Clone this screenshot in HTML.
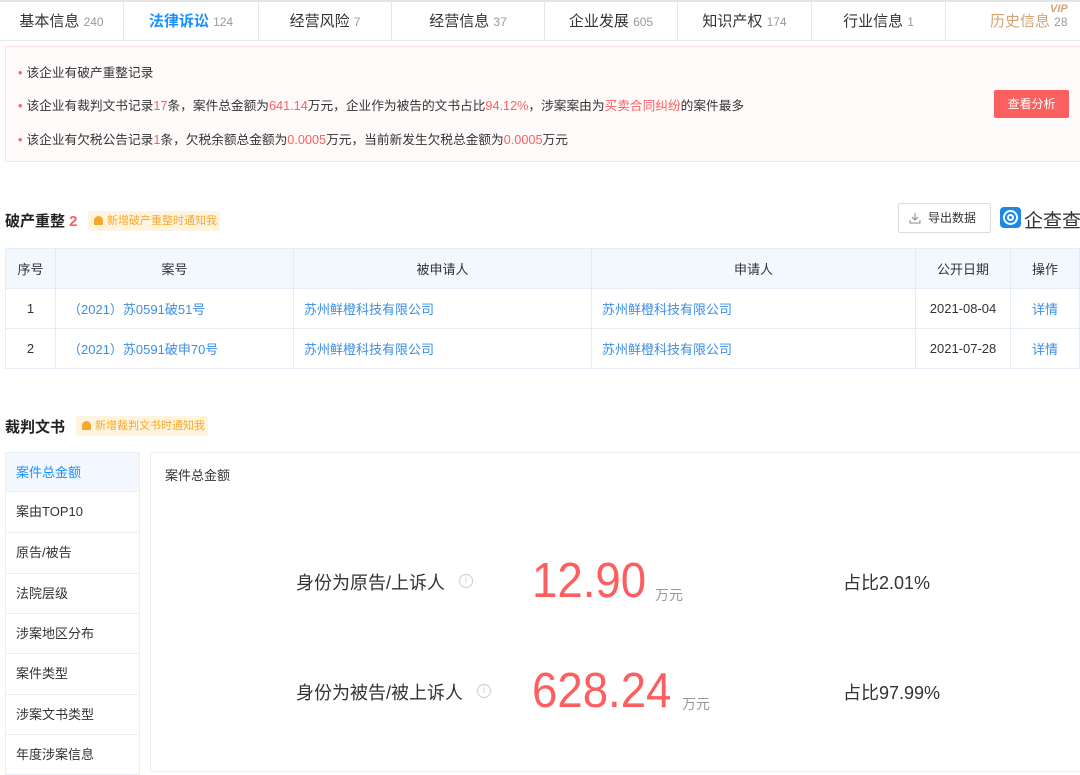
<!DOCTYPE html>
<html><head><meta charset="utf-8"><style>
*{margin:0;padding:0;box-sizing:border-box}
body{width:1080px;height:760px;overflow:hidden;background:#fff;font-family:"Liberation Sans","Noto Sans CJK SC",sans-serif;color:#333;position:relative}
.a{position:absolute;white-space:nowrap}
.tab{position:absolute;top:2px;height:39px;line-height:39px;text-align:center;font-size:15px;color:#333;border-right:1px solid #e8e8e8}
.tab small{font-size:12px;color:#999}
.red{color:#fc5f5f}
.li{position:absolute;left:18px;font-size:12.7px;color:#333;white-space:nowrap}
.li:before{content:"•";color:#fc5f5f;margin-right:4px}
.tag{position:absolute;height:20px;line-height:20px;background:#fff4e0;color:#f9a825;font-size:11px;padding-left:19px;border-radius:2px;white-space:nowrap;overflow:hidden}
.tag:before{content:"";position:absolute;left:6px;top:5px;width:9px;height:9px;background:#f9a825;border-radius:5px 5px 1px 1px}
table{position:absolute;left:5px;top:248px;width:1075px;border-collapse:collapse;font-size:13px}
td,th{border:1px solid #e4edf6;height:40px;font-weight:normal}
th{background:#f2f8fd;color:#333}
td{color:#333}
.bl{color:#3a8ee6}
.nav{position:absolute;left:5px;width:135px;height:40px;line-height:40px;padding-left:10px;font-size:13px;color:#333;border:1px solid #e8eff6;border-top:none}
.big{font-size:49px;color:#fc5f5f;line-height:56px;transform:scaleX(0.93);transform-origin:left}
</style></head><body>
<div class="a" style="left:0;top:0;width:1080px;height:2px;background:#e4e4e4"></div>
<div class="a" style="left:0;top:40px;width:1080px;height:1px;background:#e8e8e8"></div>
<div class="tab" style="left:0;width:124px">基本信息 <small>240</small></div>
<div class="tab" style="left:124px;width:135px;color:#1890ff;font-weight:bold">法律诉讼 <small style="font-weight:normal">124</small></div>
<div class="tab" style="left:259px;width:133px">经营风险 <small>7</small></div>
<div class="tab" style="left:392px;width:153px">经营信息 <small>37</small></div>
<div class="tab" style="left:545px;width:133px">企业发展 <small>605</small></div>
<div class="tab" style="left:678px;width:134px">知识产权 <small>174</small></div>
<div class="tab" style="left:812px;width:134px">行业信息 <small>1</small></div>
<div class="tab" style="left:946px;width:134px;border:none;color:#d4a574;text-align:left;padding-left:44px">历史信息 <small>28</small></div>
<div class="a" style="left:1050px;top:3px;font-size:11px;font-weight:bold;font-style:italic;color:#d4a574">VIP</div>

<div class="a" style="left:5px;top:46px;width:1080px;height:116px;background:#fffafa;border:1px solid #fde0e0"></div>
<div class="li" style="top:62px">该企业有破产重整记录</div>
<div class="li" style="top:95px">该企业有裁判文书记录<span class="red">17</span>条，案件总金额为<span class="red">641.14</span>万元，企业作为被告的文书占比<span class="red">94.12%</span>，涉案案由为<span class="red">买卖合同纠纷</span>的案件最多</div>
<div class="li" style="top:129px">该企业有欠税公告记录<span class="red">1</span>条，欠税余额总金额为<span class="red">0.0005</span>万元，当前新发生欠税总金额为<span class="red">0.0005</span>万元</div>
<div class="a" style="left:994px;top:90px;width:75px;height:28px;line-height:28px;background:#fc5f5f;color:#fff;font-size:12px;text-align:center;border-radius:2px">查看分析</div>

<div class="a" style="left:5px;top:210px;font-size:15px;font-weight:bold;color:#222">破产重整 <span class="red">2</span></div>
<div class="tag" style="left:88px;top:211px;width:132px">新增破产重整时通知我</div>
<div class="a" style="left:898px;top:203px;width:93px;height:30px;border:1px solid #ddd;border-radius:2px;font-size:12px;line-height:28px;padding-left:29px;color:#333">导出数据
<svg class="a" style="left:10px;top:8px" width="12" height="12" viewBox="0 0 12 12" fill="none" stroke="#888" stroke-width="1"><path d="M6 1v7M3 5l3 3 3-3M1 8v3h10V8"/></svg></div>
<div class="a" style="left:1000px;top:207px;width:21px;height:21px;background:#1e88e5;border-radius:4px"><div class="a" style="left:3px;top:3px;width:15px;height:15px;border:2px solid #fff;border-radius:50%"></div><div class="a" style="left:7px;top:7px;width:7px;height:7px;border:2px solid #fff;border-radius:50%"></div></div>
<div class="a" style="left:1024px;top:206px;font-size:19px;color:#333">企查查</div>

<table>
<tr><th style="width:50px">序号</th><th style="width:238px">案号</th><th style="width:298px">被申请人</th><th style="width:324px">申请人</th><th style="width:95px">公开日期</th><th>操作</th></tr>
<tr><td align="center">1</td><td class="bl" style="padding-left:12px">（2021）苏0591破51号</td><td class="bl" style="padding-left:10px">苏州鲜橙科技有限公司</td><td class="bl" style="padding-left:10px">苏州鲜橙科技有限公司</td><td align="center">2021-08-04</td><td class="bl" align="center">详情</td></tr>
<tr><td align="center">2</td><td class="bl" style="padding-left:12px">（2021）苏0591破申70号</td><td class="bl" style="padding-left:10px">苏州鲜橙科技有限公司</td><td class="bl" style="padding-left:10px">苏州鲜橙科技有限公司</td><td align="center">2021-07-28</td><td class="bl" align="center">详情</td></tr>
</table>

<div class="a" style="left:5px;top:416px;font-size:15px;font-weight:bold;color:#222">裁判文书</div>
<div class="tag" style="left:76px;top:416px;width:132px">新增裁判文书时通知我</div>

<div class="nav" style="top:452px;border-top:1px solid #e8eff6;background:#f2f8fd;color:#1890ff">案件总金额</div>
<div class="nav" style="top:492px;height:41px">案由TOP10</div>
<div class="nav" style="top:533px;height:41px">原告/被告</div>
<div class="nav" style="top:574px;height:40px">法院层级</div>
<div class="nav" style="top:614px;height:40px">涉案地区分布</div>
<div class="nav" style="top:654px;height:41px">案件类型</div>
<div class="nav" style="top:695px;height:40px">涉案文书类型</div>
<div class="nav" style="top:735px;height:40px">年度涉案信息</div>

<div class="a" style="left:150px;top:452px;width:940px;height:320px;border:1px solid #e8eff6"></div>
<div class="a" style="left:165px;top:465px;font-size:13px">案件总金额</div>

<div class="a" style="left:296px;top:569px;font-size:18px">身份为原告/上诉人</div>
<div class="a" style="left:459px;top:574px;width:14px;height:14px;border:1px solid #ccc;border-radius:50%;font-size:10px;line-height:12px;text-align:center;color:#ccc">i</div>
<div class="a big" style="left:532px;top:553px">12.90</div>
<div class="a" style="left:655px;top:585px;font-size:14px;color:#999">万元</div>
<div class="a" style="left:843px;top:569px;font-size:18px">占比2.01%</div>

<div class="a" style="left:296px;top:679px;font-size:18px">身份为被告/被上诉人</div>
<div class="a" style="left:477px;top:684px;width:14px;height:14px;border:1px solid #ccc;border-radius:50%;font-size:10px;line-height:12px;text-align:center;color:#ccc">i</div>
<div class="a big" style="left:532px;top:663px">628.24</div>
<div class="a" style="left:682px;top:694px;font-size:14px;color:#999">万元</div>
<div class="a" style="left:843px;top:679px;font-size:18px">占比97.99%</div>
</body></html>
